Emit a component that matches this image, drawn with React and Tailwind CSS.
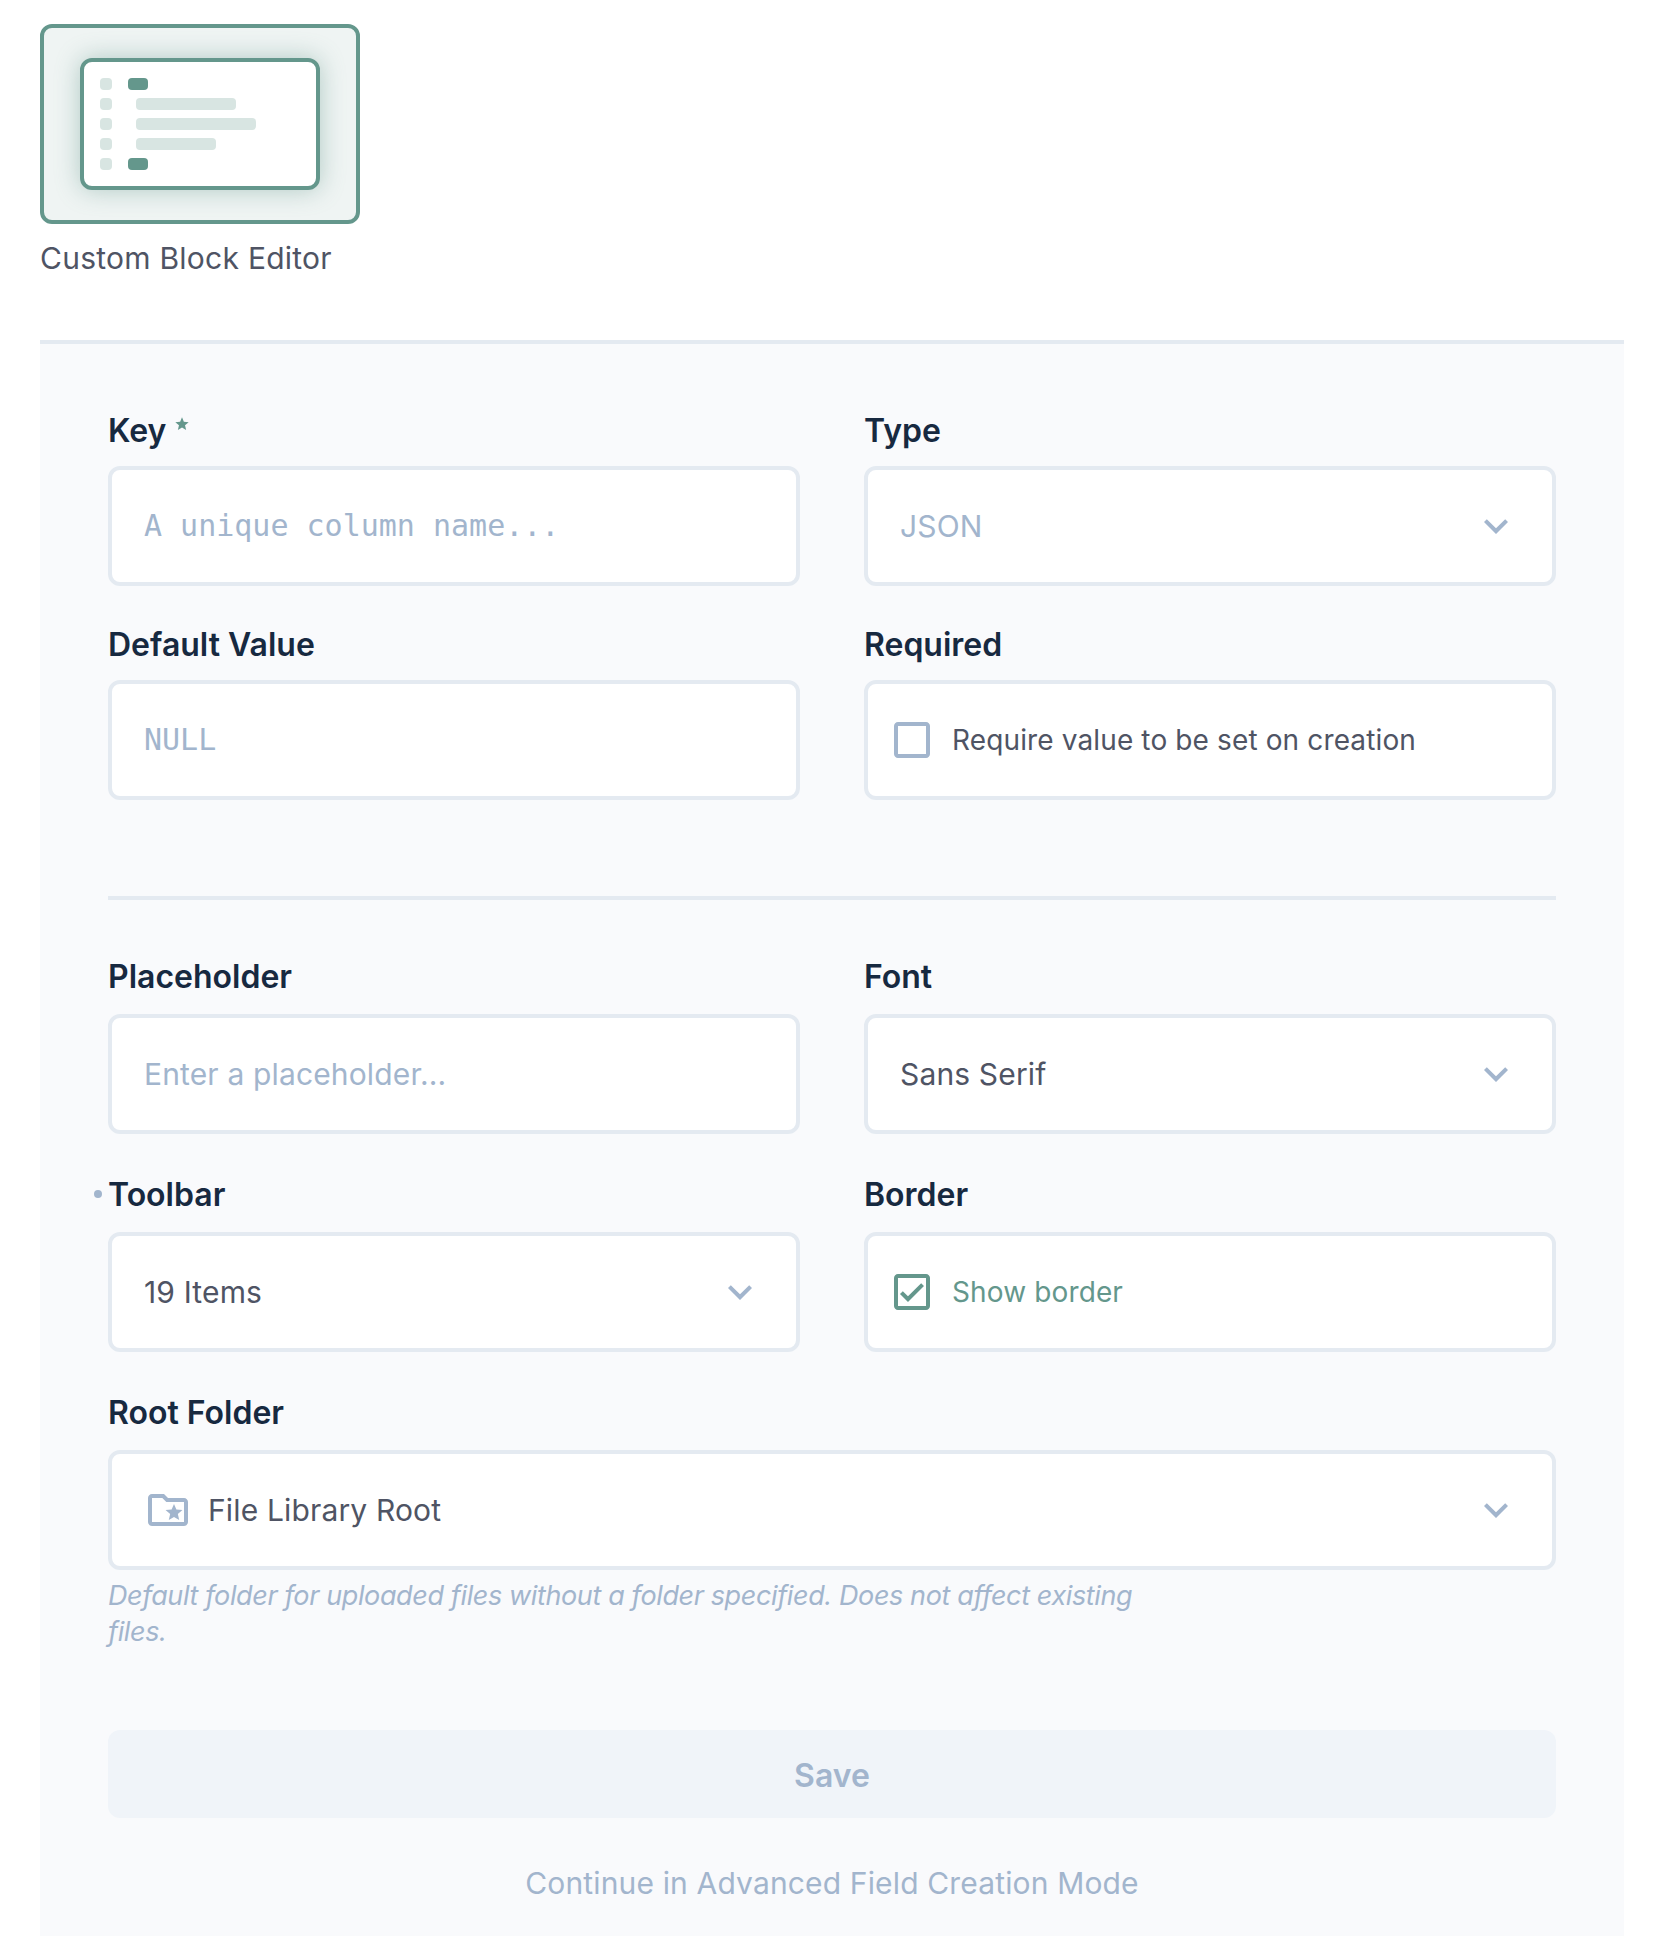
import {
  MdExpandMore,
  MdOutlineCheckBox,
  MdOutlineCheckBoxOutlineBlank,
  MdOutlineFolderSpecial,
  MdStar,
} from "react-icons/md";

const Label = ({ children, required, edited, className = "mb-[17px]" }) => (
  <div className={`relative flex items-start h-[40px] text-[32px] leading-[40px] font-semibold text-[#172940] ${className}`}>
    {edited && (
      <span className="absolute left-[-14px] top-[15px] w-2 h-2 rounded-full bg-[#a2b5cd]" />
    )}
    {children}
    {required && <MdStar size={16} className="ml-2 mt-[5px] text-[#64978c]" />}
  </div>
);

const Box = ({ children, className = "" }) => (
  <div
    className={`flex items-center h-[120px] bg-white border-4 border-[#e4eaf1] rounded-xl text-[30px] leading-[40px] text-[#4f5464] ${className}`}
  >
    {children}
  </div>
);

const Select = ({ value, muted, icon }) => (
  <Box className="pl-8 pr-[32px]">
    {icon}
    <span className={`tracking-[0.15px] ${muted ? "text-[#a2b5cd]" : ""}`}>{value}</span>
    <MdExpandMore size={48} className="ml-auto text-[#a2b5cd]" />
  </Box>
);

const Check = ({ label, checked }) => (
  <Box className="pl-[20px]">
    {checked ? (
      <MdOutlineCheckBox size={48} className="text-[#64978c]" />
    ) : (
      <MdOutlineCheckBoxOutlineBlank size={48} className="text-[#a2b5cd]" />
    )}
    <span className={`ml-4 text-[28px] tracking-[0.13px] ${checked ? "text-[#64978c]" : ""}`}>{label}</span>
  </Box>
);

const Mono = ({ children }) => (
  <Box className="pl-8 font-['DejaVu_Sans_Mono',monospace] text-[#a2b5cd]">{children}</Box>
);

const Preview = () => (
  <div className="flex items-center justify-center w-[320px] h-[200px] bg-[#eff4f3] border-4 border-[#64978c] rounded-xl">
    <div className="flex flex-col gap-2 w-[240px] h-[132px] pt-4 pl-4 bg-white border-4 border-[#64978c] rounded-xl shadow-[0_0_24px_rgba(100,151,140,0.45)]">
      {[
        { w: "w-[20px]", ml: "ml-4", dark: true },
        { w: "w-[100px]", ml: "ml-6" },
        { w: "w-[120px]", ml: "ml-6" },
        { w: "w-[80px]", ml: "ml-6" },
        { w: "w-[20px]", ml: "ml-4", dark: true },
      ].map((row, i) => (
        <div key={i} className="flex">
          <div className="w-3 h-3 rounded-[4px] bg-[#d8e5e2]" />
          <div
            className={`h-3 rounded-[4px] ${row.w} ${row.ml} ${row.dark ? "bg-[#64978c]" : "bg-[#d8e5e2]"}`}
          />
        </div>
      ))}
    </div>
  </div>
);

export default function App() {
  return (
    <div className="w-[1666px] h-[1936px] overflow-hidden bg-white pl-10 pt-6 font-['Inter',sans-serif]">
      <Preview />
      <div className="mt-[14px] text-[30px] leading-[40px] tracking-[0.25px] text-[#4f5464]">Custom Block Editor</div>

      <div className="w-[1584px] h-[1600px] mt-[62px] px-[68px] pt-[67px] bg-[#f9fafc] border-t-4 border-[#e4eaf1]">
        <div className="grid grid-cols-2 gap-x-16 gap-y-[39px]">
          <div>
            <Label required className="mb-[15px]">Key</Label>
            <Mono>A unique column name...</Mono>
          </div>
          <div>
            <Label className="mb-[15px]">Type</Label>
            <Select value="JSON" muted />
          </div>
          <div>
            <Label className="mb-[15px]">Default Value</Label>
            <Mono>NULL</Mono>
          </div>
          <div>
            <Label className="mb-[15px]">Required</Label>
            <Check label="Require value to be set on creation" />
          </div>
        </div>

        <div className="h-1 mt-[96px] mb-[57px] bg-[#e4eaf1]" />

        <div className="grid grid-cols-2 gap-x-16 gap-y-[41px]">
          <div>
            <Label>Placeholder</Label>
            <Box className="pl-8 tracking-[0.15px] text-[#a2b5cd]">Enter a placeholder...</Box>
          </div>
          <div>
            <Label>Font</Label>
            <Select value="Sans Serif" />
          </div>
          <div>
            <Label edited>Toolbar</Label>
            <Select value="19 Items" />
          </div>
          <div>
            <Label>Border</Label>
            <Check label="Show border" checked />
          </div>
          <div className="col-span-2">
            <Label>Root Folder</Label>
            <Select
              value="File Library Root"
              icon={<MdOutlineFolderSpecial size={48} className="mr-4 text-[#a2b5cd]" />}
            />
            <p className="max-w-[1040px] mt-2 text-[27px] leading-[36px] tracking-[-0.38px] italic text-[#a2b5cd]">
              Default folder for uploaded files without a folder specified. Does not affect existing files.
            </p>
          </div>
        </div>

        <button className="block w-full h-[88px] mt-[80px] pt-[3px] rounded-xl bg-[#f0f4f9] text-[32px] font-semibold text-[#a2b5cd]">
          Save
        </button>
        <div className="mt-[45px] text-center text-[30px] leading-[40px] tracking-[0.15px] text-[#a2b5cd]">
          Continue in Advanced Field Creation Mode
        </div>
      </div>
    </div>
  );
}
